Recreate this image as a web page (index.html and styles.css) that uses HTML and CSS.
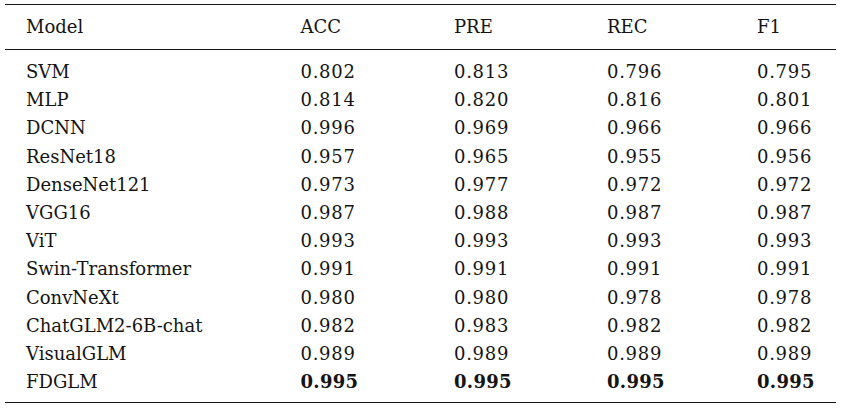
FILE: index.html
```html
<!DOCTYPE html>
<html>
<head>
<meta charset="utf-8">
<link rel="stylesheet" href="styles.css">
</head>
<body>
<table class="results">
  <colgroup>
    <col class="c-model">
    <col class="c-acc">
    <col class="c-pre">
    <col class="c-rec">
    <col class="c-f1">
  </colgroup>
  <thead>
    <tr><th>Model</th><th>ACC</th><th>PRE</th><th>REC</th><th>F1</th></tr>
  </thead>
  <tbody>
    <tr><td>SVM</td><td>0.802</td><td>0.813</td><td>0.796</td><td>0.795</td></tr>
    <tr><td>MLP</td><td>0.814</td><td>0.820</td><td>0.816</td><td>0.801</td></tr>
    <tr><td>DCNN</td><td>0.996</td><td>0.969</td><td>0.966</td><td>0.966</td></tr>
    <tr><td>ResNet18</td><td>0.957</td><td>0.965</td><td>0.955</td><td>0.956</td></tr>
    <tr><td>DenseNet121</td><td>0.973</td><td>0.977</td><td>0.972</td><td>0.972</td></tr>
    <tr><td>VGG16</td><td>0.987</td><td>0.988</td><td>0.987</td><td>0.987</td></tr>
    <tr><td>ViT</td><td>0.993</td><td>0.993</td><td>0.993</td><td>0.993</td></tr>
    <tr><td>Swin-Transformer</td><td>0.991</td><td>0.991</td><td>0.991</td><td>0.991</td></tr>
    <tr><td>ConvNeXt</td><td>0.980</td><td>0.980</td><td>0.978</td><td>0.978</td></tr>
    <tr><td>ChatGLM2-6B-chat</td><td>0.982</td><td>0.983</td><td>0.982</td><td>0.982</td></tr>
    <tr><td>VisualGLM</td><td>0.989</td><td>0.989</td><td>0.989</td><td>0.989</td></tr>
    <tr><td>FDGLM</td><td class="best">0.995</td><td class="best">0.995</td><td class="best">0.995</td><td class="best">0.995</td></tr>
  </tbody>
</table>
</body>
</html>
```

FILE: styles.css
```css
html, body {
  margin: 0;
  padding: 0;
  background: #ffffff;
}

body {
  padding: 4px 14px 0 5px;
  font-family: "DejaVu Serif", "Liberation Serif", serif;
  font-size: 18px;
  color: #141414;
}

.results {
  width: 831px;
  border-collapse: collapse;
  table-layout: fixed;
  border-top: 1.3px solid #141414;
  border-bottom: 1.3px solid #141414;
}

.c-model { width: 295.5px; }
.c-acc { width: 153.5px; }
.c-pre { width: 153px; }
.c-rec { width: 150px; }
.c-f1 { width: 79px; }

.results th,
.results td {
  padding: 0;
  text-align: left;
  font-weight: normal;
  white-space: nowrap;
  line-height: 28.2px;
}

.results td + td {
  letter-spacing: 0.7px;
}

.results th:first-child,
.results td:first-child {
  padding-left: 21px;
}

.results thead th {
  height: 44px;
  line-height: 44px;
  border-bottom: 1.3px solid #141414;
}

.results tbody tr:first-child td {
  padding-top: 8px;
}

.results tbody tr:last-child td {
  padding-bottom: 6px;
}

.results td.best {
  font-weight: bold;
  letter-spacing: 0.3px;
}
```
